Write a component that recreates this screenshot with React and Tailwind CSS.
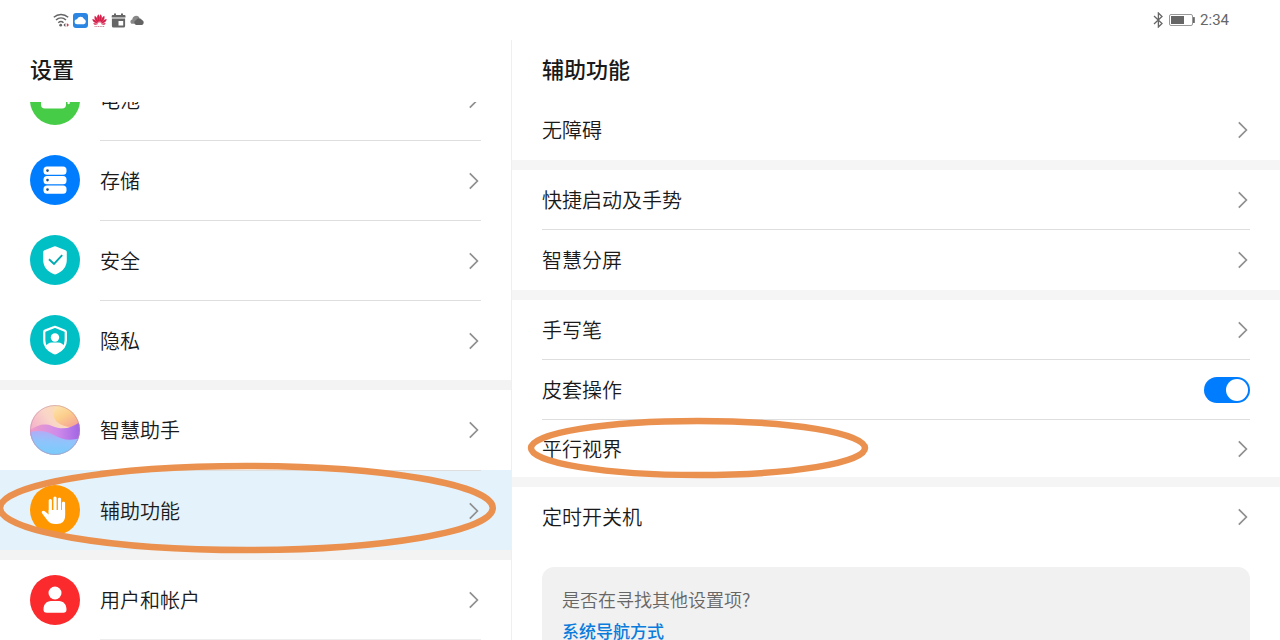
import React, { useState } from "react";

const Chevron = () => (
  <svg width="10" height="18" viewBox="0 0 10 18" fill="none" className="shrink-0 mr-0.5">
    <path d="M.8 1.300 8.400 9l-7.600 7.700" stroke="#8f8f8f" strokeWidth="1.7" />
  </svg>
);

const BatteryIcon = () => (
  <svg viewBox="0 0 50 50" className="size-full">
    <circle cx="25" cy="25" r="25" fill="#47cc47" />
    <rect x="11" y="13" width="25" height="20.500" rx="4" fill="#fff" />
    <path d="M37.500 25v3.500a1 1 0 0 0 2.200-1V25z" fill="#fff" />
  </svg>
);

const StorageIcon = () => (
  <svg viewBox="0 0 50 50" className="size-full">
    <circle cx="25" cy="25" r="25" fill="#007dff" />
    {[11.5, 21, 30.5].map((y) => (
      <g key={y}>
        <rect x="13.500" y={y} width="23" height="8.200" rx="3.500" fill="#fff" />
        <circle cx="17.500" cy={y + 4.1} r="1.300" fill="#1e4f80" />
      </g>
    ))}
  </svg>
);

const SecurityIcon = () => (
  <svg viewBox="0 0 50 50" className="size-full">
    <circle cx="25" cy="25" r="25" fill="#00c0c6" />
    <path
      d="M24 11.500q1-.500 2 0l9.500 3.700q1.300.500 1.300 1.800V25c0 7-4.600 11.600-10.300 14.100q-1.500.600-3 0C17.800 36.600 13.200 32 13.200 25v-8q0-1.300 1.300-1.800z"
      fill="#fff"
    />
    <path d="m19 24.200 5 4.800L32.200 20.200" fill="none" stroke="#00aab2" strokeWidth="1.900" />
  </svg>
);

const PrivacyIcon = () => (
  <svg viewBox="0 0 50 50" className="size-full">
    <circle cx="25" cy="25" r="25" fill="#00c0c6" />
    <path
      d="M24.300 12q.700-.300 1.400 0l9.200 3.700q.900.400.900 1.400v8c0 6.300-4 10.400-9.500 12.900q-1.300.500-2.600 0C18.200 35.500 14.200 31.400 14.200 25v-8q0-1 .9-1.400z"
      fill="none"
      stroke="#fff"
      strokeWidth="2.300"
    />
    <circle cx="25" cy="22.500" r="4.200" fill="#fff" />
    <path d="M15.500 32c1-3 3.500-4.500 6.500-4.500h6c3 0 5.500 1.500 6.500 4.500-2 3-5 5.200-9.500 6.500-4.500-1.300-7.500-3.500-9.500-6.500z" fill="#fff" />
  </svg>
);

const AssistantIcon = () => (
  <svg viewBox="0 0 50 50" className="size-full">
    <defs>
      <linearGradient id="sky" x1="0" y1=".6" x2=".8" y2="0">
        <stop offset="0" stopColor="#f3a8ca" />
        <stop offset=".5" stopColor="#f9d5c8" />
        <stop offset="1" stopColor="#fde2a4" />
      </linearGradient>
      <linearGradient id="glow" x1="0" y1="0" x2=".7" y2="1">
        <stop offset="0" stopColor="#fde6b4" />
        <stop offset=".5" stopColor="#fccf8c" />
        <stop offset="1" stopColor="#f6a594" />
      </linearGradient>
      <linearGradient id="wave" x1="0" y1="0" x2="1" y2="0">
        <stop offset="0" stopColor="#ee9cc6" />
        <stop offset=".55" stopColor="#d08bea" />
        <stop offset="1" stopColor="#a065e4" />
      </linearGradient>
      <linearGradient id="sea" x1=".5" y1="0" x2=".4" y2="1">
        <stop offset="0" stopColor="#b5aaf6" />
        <stop offset=".45" stopColor="#8fc4fb" />
        <stop offset="1" stopColor="#78ccfb" />
      </linearGradient>
      <clipPath id="ball">
        <circle cx="25" cy="25" r="25" />
      </clipPath>
    </defs>
    <g clipPath="url(#ball)">
      <rect width="50" height="50" fill="url(#sky)" />
      <path d="M27 0c-4 6-5 12 0 17 7 6 17 6 23 3V0z" fill="url(#glow)" />
      <path d="M0 25c8-5 14-7 22-4 10 4 18 3 28-4v23H0z" fill="url(#wave)" />
      <path d="M0 27c9-2 17-1 24 3 8 5 17 6 26 3v17H0z" fill="url(#sea)" />
    </g>
    <circle cx="25" cy="25" r="24.500" fill="none" stroke="#c08ca8" strokeOpacity=".5" />
  </svg>
);

const HandIcon = () => (
  <svg viewBox="0 0 50 50" className="size-full">
    <circle cx="25" cy="25" r="25" fill="#ff9800" />
    <g stroke="#fff" strokeWidth="3.200" strokeLinecap="round">
      <path d="M20.300 15.500V28M25 13V28M29.500 14V28M33.500 18V30" />
    </g>
    <path
      d="M18.700 25v4.500l-3.900-3.200c-2-1.500-4 .300-2.600 2.200l5.500 7.200c2 2.300 4.300 3.300 7.300 3.300h2c5 0 8.100-3 8.100-8V25z"
      fill="#fff"
    />
  </svg>
);

const UserIcon = () => (
  <svg viewBox="0 0 50 50" className="size-full">
    <circle cx="25" cy="25" r="25" fill="#fa2a2d" />
    <circle cx="25" cy="18" r="6.500" fill="#fff" />
    <path d="M13.500 34.500c0-5 3-8.500 7.500-8.500h8c4.500 0 7.500 3.500 7.500 8.500 0 2.300-1 3.300-3.200 3.300H16.700c-2.200 0-3.200-1-3.200-3.300z" fill="#fff" />
  </svg>
);

const menuGroups = [
  [
    { label: "电池", Icon: BatteryIcon },
    { label: "存储", Icon: StorageIcon },
    { label: "安全", Icon: SecurityIcon },
    { label: "隐私", Icon: PrivacyIcon },
  ],
  [
    { label: "智慧助手", Icon: AssistantIcon },
    { label: "辅助功能", Icon: HandIcon, marked: true },
  ],
  [
    { label: "用户和帐户", Icon: UserIcon },
  ],
];

const StatusBar = () => (
  <div className="h-10 shrink-0 flex items-center justify-between pl-[53px] pr-[51px] text-[#666]">
    <div className="flex items-center gap-1">
      {/* wifi */}
      <svg width="16" height="16" viewBox="0 0 16 16" fill="none">
        <path d="M.8 5.200c4.200-3.700 10.200-3.700 14.400 0M3 8c3-2.700 7-2.700 10 0M5.300 10.700c1.600-1.400 3.700-1.400 5.200 0" stroke="#666" strokeWidth="1.500" />
        <circle cx="7.700" cy="13.200" r="1.400" fill="#666" />
        <path d="m10.500 13 1.900-2v4z" fill="#555" />
        <path d="m16 13-2.200-2v4z" fill="#d33a55" />
      </svg>
      {/* cloud app */}
      <svg width="15" height="15" viewBox="0 0 15 15">
        <rect width="15" height="15" rx="3" fill="#2a86e2" />
        <path d="M4.200 11.300a2.500 2.500 0 0 1-.2-5 3.700 3.700 0 0 1 7-.2 2.700 2.700 0 0 1-.3 5.200z" fill="#fff" />
      </svg>
      {/* huawei */}
      <svg width="15" height="15" viewBox="0 0 15 15" fill="#d5214b">
        <path d="M7.200 9.800C5 6.500 4.300 3.500 6.400 1.200c1.400 1.600 1.400 5 .8 8.600zM7.800 9.800c2.200-3.300 2.900-6.300.8-8.600-1.400 1.600-1.400 5-.8 8.600z" />
        <path d="M6.600 10C3.300 8 1.700 5.500 2.800 2.800 5 4 6.200 6.500 6.600 10zM8.400 10c3.300-2 4.900-4.500 3.800-7.200C10 4 8.800 6.500 8.400 10z" />
        <path d="M6.200 10.500C2.700 10.300.4 8.800.3 6c2.700.3 4.800 2 5.900 4.500zM8.800 10.500c3.500-.2 5.800-1.700 5.900-4.500-2.700.3-4.800 2-5.900 4.500zM6 11.100c-2 1-3.800.9-4.800-.6 1.500-.5 3.200-.2 4.800.6zM9 11.100c2 1 3.800.9 4.800-.6-1.500-.5-3.200-.2-4.800.6z" />
        <path d="M2.500 13.500h10" stroke="#c98b99" strokeWidth="1" strokeDasharray="1.200 .5" />
      </svg>
      {/* calendar */}
      <svg width="15" height="15" viewBox="0 0 15 15" fill="#666">
        <path d="M3 .5h2V2h5V.5h2V2h1.500q1 0 1 1v1.500H.7V3q0-1 1-1H3z" />
        <path fillRule="evenodd" d="M.9 5.500h13.200V13q0 1.500-1.500 1.500H2.400Q.9 14.500.9 13zM7.500 8v4.500h4.700V8z" />
      </svg>
      {/* weather */}
      <svg width="14" height="12" viewBox="0 0 14 12">
        <path d="M4.500 9.800h-2C-.3 9.600-.2 5.800 2.300 5.500c.3-4 5.800-5 7.200-1.500L6 9z" fill="#888" />
        <path d="M6.200 11a2.500 2.500 0 0 1-.2-4.800 3.300 3.300 0 0 1 6-.2c2.400.8 2.200 4.500-.4 5z" fill="#636363" />
      </svg>
    </div>
    <div className="flex items-center gap-1">
      <svg width="12" height="16" viewBox="0 0 12 16" fill="none" stroke="#666" strokeWidth="1.300">
        <path d="m2 4 8 7.500L6.400 15V1L10 4.500 2 12" />
      </svg>
      <svg width="28" height="14" viewBox="0 0 28 14">
        <rect x="1.500" y="1.500" width="23" height="11" rx="1.500" fill="none" stroke="#999" strokeWidth="1" />
        <rect x="3" y="3" width="13" height="8" fill="#666" />
        <rect x="25" y="4" width="1.800" height="6" rx=".6" fill="#666" />
      </svg>
      <span className="font-[Roboto,sans-serif] text-[15px] leading-5 font-normal">2:34</span>
    </div>
  </div>
);

const MenuItem = ({ item, first, last, active, onSelect }) => {
  const { label, Icon, marked } = item;

  return (
    <li className="relative">
      <button
        onClick={onSelect}
        className={`w-full h-20 px-[30px] flex items-center gap-5 text-left ${active ? "bg-[#e4f2fc]" : "bg-white"}`}
      >
        <span className="size-[50px] shrink-0">
          <Icon />
        </span>
        <span
          className={`flex-1 h-20 flex items-center justify-between ${first ? "" : "border-t border-[#dedede]"} ${last ? "border-b border-[#ededed]" : ""}`}
        >
          <span className="text-xl">{label}</span>
          <Chevron />
        </span>
      </button>
      {/* hand-drawn highlight */}
      {marked && (
        <svg
          viewBox="0 0 500 92"
          preserveAspectRatio="none"
          className="absolute z-10 -left-1 -top-2 w-[98%] h-[92px] pointer-events-none"
        >
          <ellipse cx="250" cy="46" rx="246" ry="42" fill="none" stroke="#ea9150" strokeWidth="6.500" />
        </svg>
      )}
    </li>
  );
};

const Row = ({ label, divider, short }) => (
  <button
    className={`w-full flex items-center justify-between text-left ${short ? "h-[57px]" : "h-[60px]"} ${divider ? "border-b border-[#dedede]" : ""}`}
  >
    <span className="text-xl">{label}</span>
    <Chevron />
  </button>
);

const Band = () => <div className="h-2.5 bg-[#f5f5f5]" />;

const App = () => {
  const [active, setActive] = useState("辅助功能");
  const [cover, setCover] = useState(true);

  return (
    <div
      lang="zh-CN"
      className="h-screen overflow-hidden flex flex-col bg-white text-[#1a1a1a] font-['Noto_Sans_CJK_SC',sans-serif] font-[350]"
    >
      <StatusBar />

      <div className="flex-1 min-h-0 flex">
        {/* Menu */}
        <nav className="w-2/5 flex flex-col border-r border-[#efefef]">
          <h1 className="h-[62px] shrink-0 px-[30px] pt-3 text-[22px] leading-8 font-medium">设置</h1>
          <div className="flex-1 min-h-0 overflow-hidden">
            {/* list is scrolled part way through the first row */}
            <div className="-mt-[42px]">
              {menuGroups.map((group, g) => (
                <div key={g}>
                  {g > 0 && <div className="h-2.5 bg-[#f3f3f3]" />}
                  <ul>
                    {group.map((item, i) => (
                      <MenuItem
                        key={item.label}
                        item={item}
                        first={i === 0}
                        last={g === menuGroups.length - 1 && i === group.length - 1}
                        active={active === item.label}
                        onSelect={() => setActive(item.label)}
                      />
                    ))}
                  </ul>
                </div>
              ))}
            </div>
          </div>
        </nav>

        {/* Detail */}
        <main className="flex-1 min-w-0 overflow-hidden">
          <h2 className="h-[60px] px-[30px] pt-3 text-[22px] leading-8 font-medium">辅助功能</h2>

          <div className="px-[30px]">
            <Row label="无障碍" />
          </div>
          <Band />
          <div className="px-[30px]">
            <Row label="快捷启动及手势" divider />
            <Row label="智慧分屏" />
          </div>
          <Band />
          <div className="px-[30px]">
            <Row label="手写笔" divider />
            <label className="h-[60px] flex items-center justify-between border-b border-[#dedede]">
              <span className="text-xl">皮套操作</span>
              <input
                type="checkbox"
                role="switch"
                checked={cover}
                onChange={(e) => setCover(e.target.checked)}
                className="appearance-none w-[46px] h-[26px] p-0.5 rounded-full flex bg-[#ccc] checked:bg-[#007dff] checked:justify-end before:size-[22px] before:rounded-full before:bg-white"
              />
            </label>
            <div className="relative">
              <Row label="平行视界" short />
              <svg
                viewBox="0 0 344 64"
                className="absolute z-10 -left-4 -top-1 w-[344px] h-16 pointer-events-none"
              >
                <ellipse cx="172" cy="32" rx="167" ry="27" fill="none" stroke="#ea9150" strokeWidth="6.500" />
              </svg>
            </div>
          </div>
          <Band />
          <div className="px-[30px]">
            <Row label="定时开关机" />
            <div className="mt-5 p-5 rounded-xl bg-[#f1f1f1]">
              <p className="text-lg leading-6 text-[#666]">是否在寻找其他设置项?</p>
              <a href="#navigation" className="block mt-2 text-[17px] leading-6 font-medium text-[#0a7cdc]">
                系统导航方式
              </a>
            </div>
          </div>
        </main>
      </div>
    </div>
  );
};

export default App;
